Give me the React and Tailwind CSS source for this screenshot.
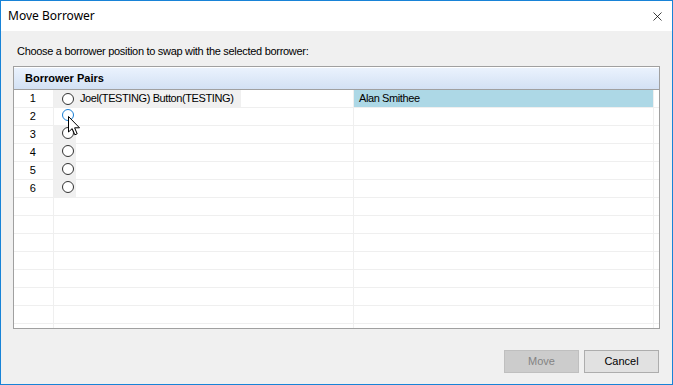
import { X } from "lucide-react";

const rows = [1, 2, 3, 4, 5, 6];
const blankRows = Array.from({ length: 8 });

const Radio = ({ hover = false }) => (
  <span
    className={`inline-block w-[12px] h-[12px] rounded-full border bg-white ${
      hover ? "border-[#1a7fd6]" : "border-[#333333]"
    }`}
  />
);

const Cursor = () => (
  <svg
    className="absolute left-[67px] top-[115px]"
    width="13"
    height="20"
    viewBox="0 0 13 20"
  >
    <path
      d="M0.5 0.5 L0.5 16 L4.2 12.6 L6.8 18.8 L9.2 17.8 L6.6 11.8 L11.5 11.8 Z"
      fill="#ffffff"
      stroke="#000000"
      strokeWidth="1"
      strokeLinejoin="miter"
    />
  </svg>
);

const App = () => {
  return (
    <div
      className="relative w-[673px] h-[385px] flex flex-col border border-[#1883d7] bg-[#f0f0f0] overflow-hidden"
      style={{ fontFamily: '"Liberation Sans", Arial, sans-serif' }}
    >
      {/* Title bar */}
      <div className="h-[30px] bg-white flex items-center justify-between pl-[7px] pr-[7px]">
        <span
          className="text-[12px] text-black"
          style={{ fontFamily: '"Noto Sans", "Liberation Sans", sans-serif' }}
        >
          Move Borrower
        </span>
        <X className="w-[15px] h-[15px] text-black" strokeWidth={1.2} />
      </div>

      {/* Body */}
      <div className="flex-1 flex flex-col px-[12px]">
        <p className="mt-[14px] pl-[4px] text-[11px] leading-[13px] text-black tracking-[-0.3px]">
          Choose a borrower position to swap with the selected borrower:
        </p>

        {/* Grid */}
        <div className="mt-[8px] w-[647px] h-[263px] border border-[#a0a0a0] bg-white overflow-hidden flex flex-col">
          <div className="h-[23px] shrink-0 border-b border-[#a0a0a0] border-t border-t-white bg-gradient-to-b from-[#eaf2fd] to-[#d3e1f4] flex items-center pl-[11px]">
            <span className="text-[11px] font-bold text-black">Borrower Pairs</span>
          </div>

          {rows.map((n) => (
            <div
              key={n}
              className="h-[18px] shrink-0 flex border-b border-[#efefef] text-[11px] text-black tracking-[-0.4px]"
            >
              <div className="w-[40px] shrink-0 border-r border-[#efefef] flex items-center justify-center pr-[2px]">
                {n}
              </div>
              <div className="w-[300px] shrink-0 border-r border-[#efefef] flex items-center">
                {n === 1 ? (
                  <div className="h-full w-[187px] bg-[#f0f0f0] flex items-center pl-[8px] gap-[6px]">
                    <Radio />
                    <span>Joel(TESTING) Button(TESTING)</span>
                  </div>
                ) : (
                  <div
                    className={`h-full w-[22px] flex items-start pt-[1px] pl-[8px] ${
                      n === 2 ? "" : "bg-[#f0f0f0]"
                    }`}
                  >
                    <Radio hover={n === 2} />
                  </div>
                )}
              </div>
              <div
                className={`w-[300px] shrink-0 border-r border-[#efefef] flex items-center pl-[5px] ${
                  n === 1 ? "bg-[#add8e6]" : ""
                }`}
              >
                {n === 1 ? "Alan Smithee" : ""}
              </div>
              <div className="flex-1" />
            </div>
          ))}

          {blankRows.map((_, i) => (
            <div key={i} className="h-[18px] shrink-0 flex border-b border-[#efefef]">
              <div className="w-[40px] shrink-0 border-r border-[#efefef]" />
              <div className="w-[300px] shrink-0 border-r border-[#efefef]" />
              <div className="w-[300px] shrink-0 border-r border-[#efefef]" />
              <div className="flex-1" />
            </div>
          ))}
        </div>

        {/* Buttons */}
        <div className="mt-[21px] flex justify-end gap-[5px] pr-[1px]">
          <button
            disabled
            className="w-[75px] h-[23px] bg-[#cccccc] border border-[#bfbfbf] text-[11px] text-[#838383]"
          >
            Move
          </button>
          <button className="w-[75px] h-[23px] bg-[#e1e1e1] border border-[#adadad] text-[11px] text-black">
            Cancel
          </button>
        </div>
      </div>

      <Cursor />
    </div>
  );
};

export default App;
